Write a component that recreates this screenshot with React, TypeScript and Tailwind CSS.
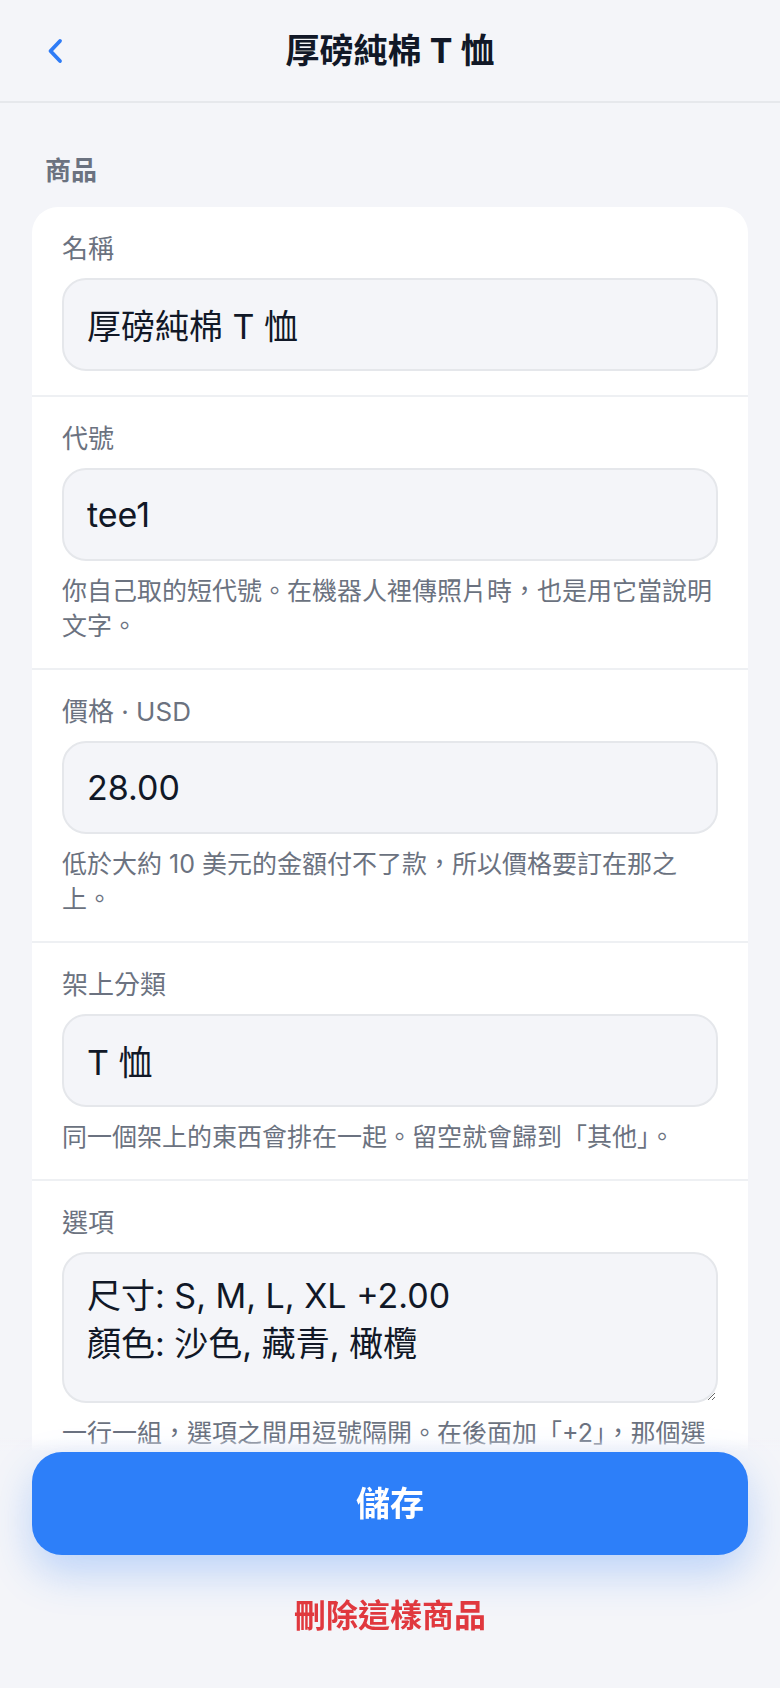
import React from 'react'

// ============================================================================
// Product edit form (mobile, 2x)
// ============================================================================

interface FieldProps {
    label: string
    value: string
    hint?: string
    multiline?: boolean
}

function Field({ label, value, hint, multiline }: FieldProps) {
    return (
        <div className="px-[30px] pt-6 pb-6">
            <label className="block text-[26px] leading-[36px] text-[#6b7280]">{label}</label>
            {multiline ? (
                <textarea
                    defaultValue={value}
                    className="mt-[11px] block h-[151px] w-full rounded-[24px] border-2 border-[#e5e7eb] bg-[#f4f5f9] px-[23px] py-[18px] text-[34px] leading-[48px] text-[#111827] outline-none"
                />
            ) : (
                <input
                    defaultValue={value}
                    className="mt-[11px] block h-[93px] w-full rounded-[24px] border-2 border-[#e5e7eb] bg-[#f4f5f9] px-[23px] text-[34px] text-[#111827] outline-none"
                />
            )}
            {hint && (
                <p className="mt-[13px] text-[25px] leading-[35px] text-[#6b7280]">{hint}</p>
            )}
        </div>
    )
}

export default function App() {
    return (
        <div className="min-h-screen bg-[#f4f5f9] font-[Inter,'Noto_Sans_CJK_TC',sans-serif]">
            {/* Header */}
            <header className="grid h-[103px] grid-cols-[100px_1fr_100px] items-center border-b-2 border-[#e6e8ec]">
                <button className="flex items-center pl-[46px] text-[#2f7cf6]">
                    <svg width="18" height="26" viewBox="0 0 18 26" fill="none">
                        <path d="M14 3 L4.5 13 L14 23" stroke="currentColor" strokeWidth="3.8" strokeLinecap="round" strokeLinejoin="round" />
                    </svg>
                </button>
                <h1 className="text-center text-[34px] font-bold text-[#111827]">厚磅純棉 T 恤</h1>
                <div />
            </header>

            <main className="px-8 pt-[50px] pb-[300px]">
                <h2 className="pl-[13px] text-[26px] font-semibold leading-[36px] text-[#6b7280]">商品</h2>

                <div className="mt-[18px] divide-y-2 divide-[#eef0f3] overflow-hidden rounded-[26px] bg-white">
                    <Field label="名稱" value="厚磅純棉 T 恤" />
                    <Field
                        label="代號"
                        value="tee1"
                        hint="你自己取的短代號。在機器人裡傳照片時，也是用它當說明文字。"
                    />
                    <Field
                        label="價格 · USD"
                        value="28.00"
                        hint="低於大約 10 美元的金額付不了款，所以價格要訂在那之上。"
                    />
                    <Field
                        label="架上分類"
                        value="T 恤"
                        hint="同一個架上的東西會排在一起。留空就會歸到「其他」。"
                    />
                    <Field
                        label="選項"
                        value={'尺寸: S, M, L, XL +2.00\n顏色: 沙色, 藏青, 橄欖'}
                        hint="一行一組，選項之間用逗號隔開。在後面加「+2」，那個選項就會多收 2 美元。"
                        multiline
                    />
                </div>
            </main>

            {/* Bottom actions */}
            <div className="fixed inset-x-0 bottom-0 bg-[linear-gradient(to_bottom,rgba(244,245,249,0)_0px,#f4f5f9_14px)] px-8 pt-[14px] pb-[50px]">
                <button className="flex h-[103px] w-full items-center justify-center rounded-[30px] bg-[#2d7ff9] text-[34px] font-bold text-white shadow-[0_18px_40px_rgba(45,127,249,0.28)]">
                    儲存
                </button>
                <button className="mt-[39px] block h-[44px] w-full text-center text-[32px] font-bold leading-[44px] text-[#e0383e]">
                    刪除這樣商品
                </button>
            </div>
        </div>
    )
}
